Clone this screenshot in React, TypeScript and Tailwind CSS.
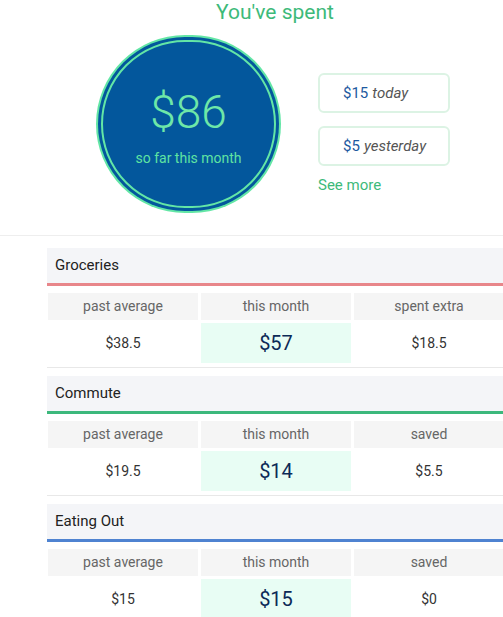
import React from "react";

type Section = {
  title: string;
  color: string;
  past: string;
  month: string;
  label: string;
  diff: string;
};

const sections: Section[] = [
  { title: "Groceries", color: "border-[#e8868a]", past: "$38.5", month: "$57", label: "spent extra", diff: "$18.5" },
  { title: "Commute", color: "border-[#3cb87c]", past: "$19.5", month: "$14", label: "saved", diff: "$5.5" },
  { title: "Eating Out", color: "border-[#4f83d1]", past: "$15", month: "$15", label: "saved", diff: "$0" },
];

function Category({ s }: { s: Section }) {
  return (
    <div className="pb-[8px]">
      <div className={`h-[38px] bg-[#f4f5f8] border-b-[3px] ${s.color} flex items-center pl-[8px] text-[15px] text-[#222]`}>
        {s.title}
      </div>
      <div className="border-b border-[#e8e8e8] pb-[4px]">
        <div className="mt-[7px] grid grid-cols-3 gap-x-[3px] gap-y-[3px] pl-[1px]">
          {["past average", "this month", s.label].map((h) => (
            <div key={h} className="h-[27px] bg-[#f5f5f5] flex items-center justify-center text-[14px] text-[#666]">
              {h}
            </div>
          ))}
          <div className="h-[40px] flex items-center justify-center text-[14px] text-[#333]">{s.past}</div>
          <div className="h-[40px] bg-[#e8fdf4] flex items-center justify-center text-[20px] text-[#0c2a57]">{s.month}</div>
          <div className="h-[40px] flex items-center justify-center text-[14px] text-[#333]">{s.diff}</div>
        </div>
      </div>
    </div>
  );
}

export default function App() {
  return (
    <div className="w-[503px] h-[617px] overflow-hidden bg-white" style={{ fontFamily: "Roboto, 'Noto Sans', sans-serif" }}>
      <div className="h-[236px] border-b border-[#eeeeee]">
        <div className="ml-[47px] w-[456px]">
          <div className="h-[25px] flex items-center justify-center text-[21px] leading-none text-[#3dba7a]">
            You've spent
          </div>
          <div className="flex mt-[10px]">
            <div className="ml-[49px] w-[185px] h-[178px] rounded-full bg-[#63e6a6] p-[2px]">
              <div className="w-full h-full rounded-full bg-[#03579c] p-[3px]">
                <div className="w-full h-full rounded-full border-2 border-[#63e6a6] bg-[#03579c] flex flex-col items-center justify-center pt-[6px]">
                  <div className="text-[46px] font-light leading-none text-[#6ee7a8]">$86</div>
                  <div className="text-[14px] leading-none text-[#5fe3a2] mt-[16px]">so far this month</div>
                </div>
              </div>
            </div>
            <div className="ml-[37px] mt-[38px] flex flex-col">
              <div className="w-[132px] h-[40px] rounded-[6px] border-2 border-[#dcf3e4] flex items-center pl-[23px] text-[15px]">
                <span className="text-[#1d5aa0]">$15</span>
                <span className="ml-[4px] italic text-[#555]">today</span>
              </div>
              <div className="mt-[13px] w-[132px] h-[40px] rounded-[6px] border-2 border-[#dcf3e4] flex items-center pl-[23px] text-[15px]">
                <span className="text-[#1d5aa0]">$5</span>
                <span className="ml-[4px] italic text-[#555]">yesterday</span>
              </div>
              <div className="mt-[12px] text-[15px] text-[#3dba7a] leading-none">See more</div>
            </div>
          </div>
        </div>
      </div>
      <div className="ml-[47px] w-[457px] mt-[12px]">
        {sections.map((s) => (
          <Category key={s.title} s={s} />
        ))}
      </div>
    </div>
  );
}
